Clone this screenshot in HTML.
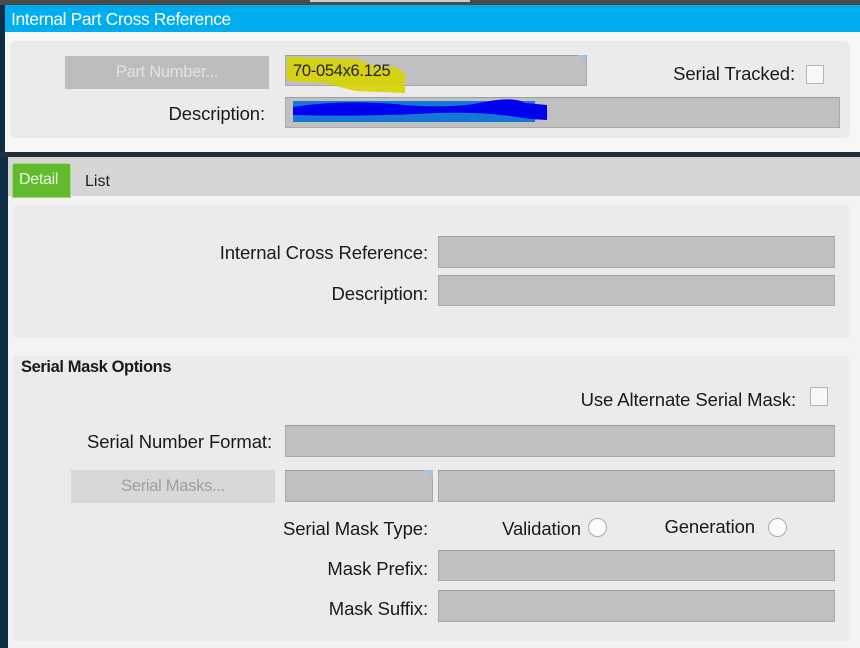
<!DOCTYPE html>
<html><head><style>
*{margin:0;padding:0;box-sizing:border-box}
body{width:860px;height:648px;overflow:hidden;background:#f3f3f3;font-family:"Liberation Sans",sans-serif;position:relative;color:#1a1a1a}
.a{position:absolute}
.inp{position:absolute;background:#c0c0c0;border:1px solid #a9a9a9;border-top-color:#9c9c9c}
.lbl{position:absolute;font-size:18.5px;text-align:right;white-space:nowrap;letter-spacing:-0.1px}
.cb{position:absolute;width:18px;height:19px;background:#f8f8f8;border:1px solid #b5b5b5}
.rd{position:absolute;width:19px;height:19px;border-radius:50%;background:#fafafa;border:1px solid #aaa}
</style></head><body>
<div class="a" style="left:0;top:0;width:860px;height:5px;background:#4a4a4a"></div>
<div class="a" style="left:310px;top:0;width:160px;height:2px;background:#ccc"></div>
<div class="a" style="left:0;top:5px;width:860px;height:27px;background:#00aeef"></div>
<div class="a" style="left:11px;top:9px;color:#fff;font-size:17.5px;letter-spacing:-0.4px">Internal Part Cross Reference</div>
<div class="a" style="left:5px;top:32px;width:855px;height:120px;background:#f7f7f7"></div>
<div class="a" style="left:10px;top:41px;width:840px;height:97px;background:#ebebeb;border-radius:6px"></div>
<div class="a" style="left:0;top:5px;width:5px;height:643px;background:#0d2e44"></div>
<div class="a" style="left:0;top:152px;width:860px;height:5px;background:#22323c"></div>
<div class="a" style="left:0;top:157px;width:8px;height:491px;background:#0d2e44"></div>
<div class="a" style="left:65px;top:56px;width:204px;height:33px;background:#bdbdbd"></div>
<div class="a" style="left:65px;top:63px;width:204px;text-align:center;color:#e2e2e2;font-size:16.5px;letter-spacing:-0.3px">Part Number...</div>
<div class="inp" style="left:285px;top:55px;width:302px;height:31px"></div>
<div class="a" style="left:577px;top:55px;width:0;height:0;border-left:9px solid transparent;border-top:9px solid #a9c1dc"></div>
<svg class="a" style="left:285px;top:55px" width="130" height="40"><path d="M2 2 L70 4 Q85 8 90 12 L110 12 L120 18 L120 38 L70 36 L40 28 L2 26Z" fill="#d7d300" opacity="0.9"/></svg>
<div class="a" style="left:293px;top:62px;font-size:16.5px;color:#222;letter-spacing:-0.3px">70-054x6.125</div>
<div class="lbl" style="left:600px;top:63px;width:195px">Serial Tracked:</div>
<div class="cb" style="left:806px;top:65px"></div>
<div class="lbl" style="left:100px;top:103px;width:165px">Description:</div>
<div class="inp" style="left:285px;top:97px;width:555px;height:31px"></div>
<div class="a" style="left:293px;top:101px;width:242px;height:21px;background:#1578d6"></div>
<svg class="a" style="left:285px;top:95px" width="270" height="30"><path d="M8 12 Q60 4 120 10 Q170 14 205 6 Q230 2 240 8 L262 10 L262 25 L245 24 Q200 16 150 18 Q80 22 8 20Z" fill="#0000f0"/></svg>
<div class="a" style="left:8px;top:157px;width:852px;height:39px;background:#d6d6d6"></div>
<div class="a" style="left:12px;top:163px;width:59px;height:35px;background:#62bb2c;border:1px solid #9fd77a;border-radius:3px 3px 0 0"></div>
<div class="a" style="left:19px;top:171px;color:#eef8e6;font-size:16px;letter-spacing:-0.3px">Detail</div>
<div class="a" style="left:85px;top:173px;font-size:16px;color:#222">List</div>
<div class="a" style="left:13px;top:205px;width:837px;height:133px;background:#ebebeb;border-radius:5px"></div>
<div class="lbl" style="left:110px;top:242px;width:318px">Internal Cross Reference:</div>
<div class="inp" style="left:438px;top:236px;width:397px;height:32px"></div>
<div class="lbl" style="left:150px;top:283px;width:278px">Description:</div>
<div class="inp" style="left:438px;top:275px;width:397px;height:31px"></div>
<div class="a" style="left:13px;top:356px;width:837px;height:285px;background:#ebebeb;border-radius:5px"></div>
<div class="a" style="left:21px;top:358px;font-size:16.5px;font-weight:bold;letter-spacing:-0.4px">Serial Mask Options</div>
<div class="lbl" style="left:460px;top:389px;width:336px">Use Alternate Serial Mask:</div>
<div class="cb" style="left:810px;top:387px"></div>
<div class="lbl" style="left:10px;top:431px;width:262px">Serial Number Format:</div>
<div class="inp" style="left:285px;top:425px;width:550px;height:32px"></div>
<div class="a" style="left:71px;top:470px;width:204px;height:33px;background:#d8d8d8"></div>
<div class="a" style="left:71px;top:477px;width:204px;text-align:center;color:#a0a0a0;font-size:16.5px;letter-spacing:-0.3px">Serial Masks...</div>
<div class="inp" style="left:285px;top:470px;width:148px;height:32px"></div>
<div class="a" style="left:424px;top:470px;width:0;height:0;border-left:9px solid transparent;border-top:9px solid #a9c1dc"></div>
<div class="inp" style="left:438px;top:470px;width:397px;height:32px"></div>
<div class="lbl" style="left:200px;top:518px;width:228px">Serial Mask Type:</div>
<div class="lbl" style="left:470px;top:518px;width:111px">Validation</div>
<div class="rd" style="left:588px;top:518px"></div>
<div class="lbl" style="left:630px;top:516px;width:125px">Generation</div>
<div class="rd" style="left:768px;top:518px"></div>
<div class="lbl" style="left:200px;top:558px;width:228px">Mask Prefix:</div>
<div class="inp" style="left:438px;top:550px;width:397px;height:31px"></div>
<div class="lbl" style="left:200px;top:598px;width:228px">Mask Suffix:</div>
<div class="inp" style="left:438px;top:590px;width:397px;height:32px"></div>
</body></html>
